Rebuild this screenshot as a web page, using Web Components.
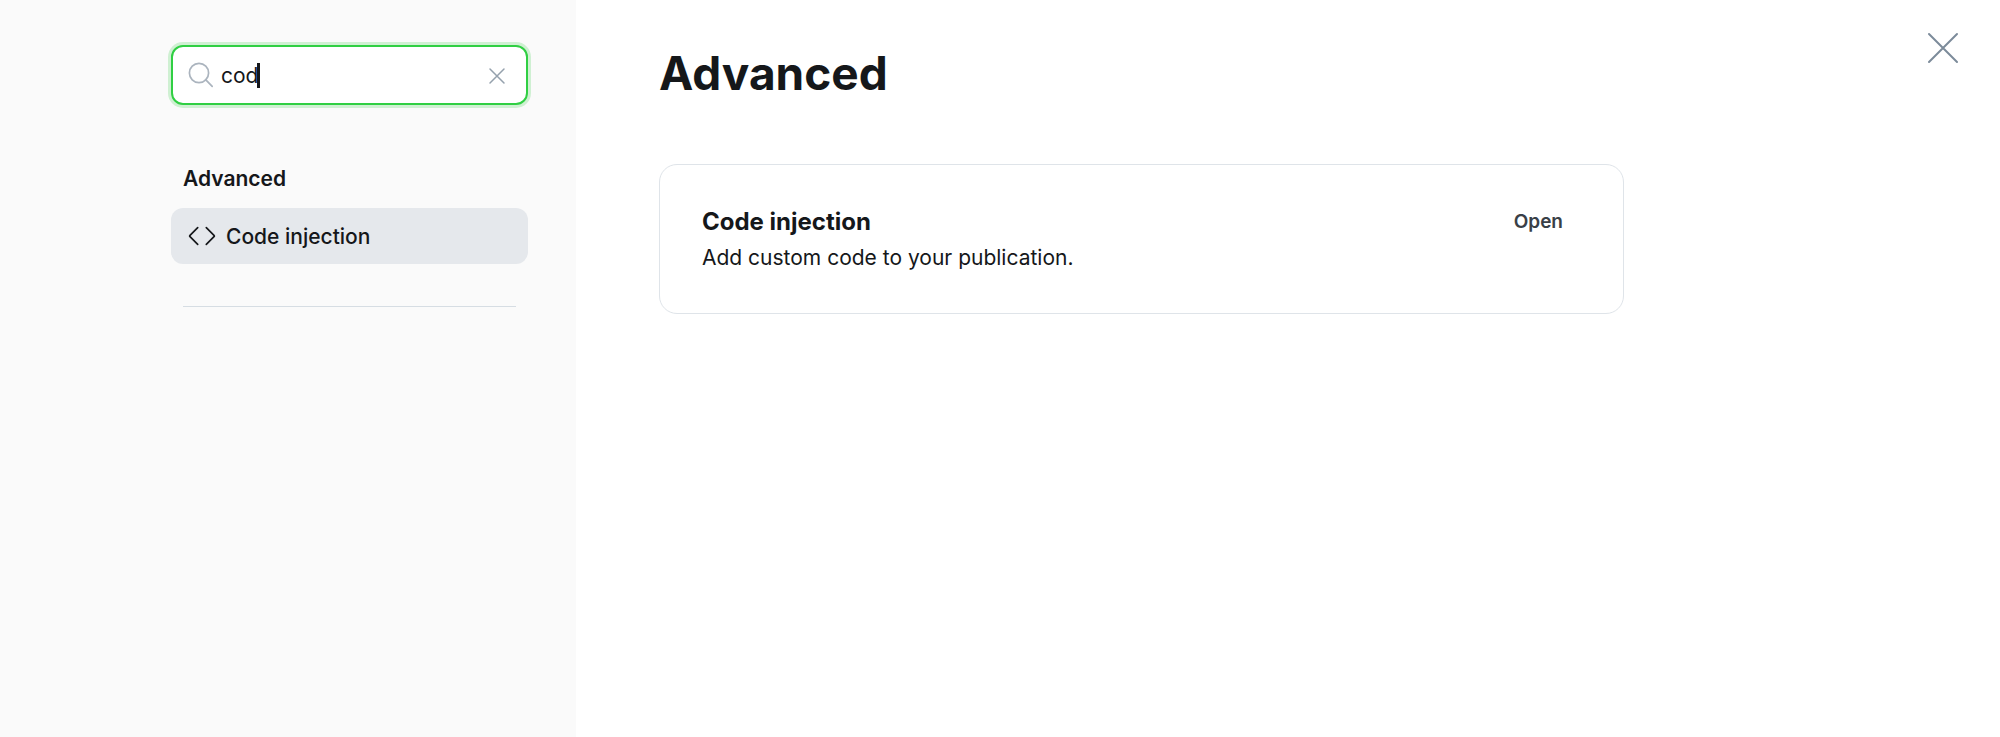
<!DOCTYPE html>
<html lang="en">
<head>
  <meta charset="utf-8">
  <meta name="viewport" content="width=device-width, initial-scale=1">
  <title>Settings</title>
  <style>
    body {
      color: #15171a;
      font-family: Inter, sans-serif;
      margin: 0;
    }
  </style>
</head>
<body>
  <settings-page>
    <settings-search slot="sidebar" value="cod"></settings-search>
    <nav-section slot="sidebar" heading="Advanced">
      <nav-item href="#code-injection">Code injection</nav-item>
    </nav-section>
    <setting-section heading="Advanced">
      <setting-card id="code-injection" action="Open">
        <span slot="title">Code injection</span>
        <span slot="description">Add custom code to your publication.</span>
      </setting-card>
    </setting-section>
  </settings-page>

  <script>
    // Attach an open shadow root filled from a markup string
    function render(el, html) {
      const template = document.createElement("template");
      template.innerHTML = html;
      el.attachShadow({mode: "open"}).appendChild(template.content.cloneNode(true));
    }

    class SettingsPage extends HTMLElement {
      constructor() {
        super();
        render(this, `
          <style>
            :host {
              background: #fff;
              display: flex;
              min-height: 100vh;
            }

            aside {
              background: #fafafa;
              box-sizing: border-box;
              display: flex;
              flex: none;
              flex-direction: column;
              gap: 58px;
              padding: 45px 48px 45px 171px;
              width: 576px;
            }

            main {
              flex: 1;
              max-width: 965px;
              padding: 45px 83px;
            }

            .exit {
              background: none;
              border: none;
              cursor: pointer;
              padding: 0;
              position: fixed;
              right: 41px;
              top: 32px;
            }

            .exit svg {
              display: block;
              height: 32px;
              width: 32px;
            }
          </style>
          <aside><slot name="sidebar"></slot></aside>
          <main><slot></slot></main>
          <button class="exit" type="button" aria-label="Close settings">
            <svg viewBox="0 0 32 32" fill="none" stroke="#7c8b9a" stroke-width="2" stroke-linecap="round">
              <path d="M2 2l28 28M30 2L2 30"/>
            </svg>
          </button>
        `);
      }
    }

    class SettingsSearch extends HTMLElement {
      constructor() {
        super();
        render(this, `
          <style>
            :host {
              display: block;
            }

            .box {
              align-items: center;
              background: #fff;
              border: 2px solid #30cf43;
              border-radius: 12px;
              box-shadow: 0 0 0 3px #cff0d2;
              box-sizing: border-box;
              display: flex;
              height: 60px;
              padding: 2px 20px 0 15px;
            }

            .lens {
              flex: none;
              height: 26px;
              margin: 0 7px 2px 0;
              width: 26px;
            }

            label {
              align-items: center;
              cursor: text;
              display: flex;
              flex: 1;
            }

            input {
              background: none;
              border: none;
              caret-color: transparent;
              color: inherit;
              field-sizing: content;
              font: 400 21px/28px Inter, sans-serif;
              outline: none;
              padding: 0;
            }

            .caret {
              background: #15171a;
              height: 25px;
              margin: 0 0 2px -1px;
              width: 3px;
            }

            button {
              background: none;
              border: none;
              cursor: pointer;
              padding: 0;
            }

            button svg {
              display: block;
              height: 18px;
              width: 18px;
            }
          </style>
          <div class="box">
            <label>
              <svg class="lens" viewBox="0 0 26 26" fill="none" stroke="#abb4be" stroke-width="1.7" stroke-linecap="round">
                <circle cx="11" cy="11" r="9.6"/>
                <path d="M17.6 17.6l6.6 6.8"/>
              </svg>
              <input type="text" aria-label="Search settings">
              <span class="caret"></span>
            </label>
            <button type="button" aria-label="Clear search">
              <svg viewBox="0 0 18 18" fill="none" stroke="#95a1ad" stroke-width="1.5" stroke-linecap="round">
                <path d="M2 2l14 14M16 2L2 16"/>
              </svg>
            </button>
          </div>
        `);
        const input = this.shadowRoot.querySelector("input");
        input.value = this.getAttribute("value") || "";
        this.shadowRoot.querySelector("button").onclick = function() {
          input.value = "";
          input.focus();
        };
      }
    }

    class NavSection extends HTMLElement {
      constructor() {
        super();
        render(this, `
          <style>
            :host {
              display: block;
            }

            h2 {
              font-size: 21px;
              font-weight: 600;
              line-height: 32px;
              margin: 0 12px 13px;
            }

            nav {
              display: flex;
              flex-direction: column;
            }

            hr {
              border: none;
              border-top: 1px solid #d6dde3;
              margin: 42px 12px 0;
            }
          </style>
          <h2></h2>
          <nav><slot></slot></nav>
          <hr>
        `);
        this.shadowRoot.querySelector("h2").textContent = this.getAttribute("heading");
      }
    }

    class NavItem extends HTMLElement {
      constructor() {
        super();
        render(this, `
          <style>
            :host {
              display: block;
            }

            a {
              align-items: center;
              background: #e5e8ec;
              border-radius: 12px;
              color: inherit;
              display: flex;
              font-size: 21px;
              font-weight: 500;
              gap: 10px;
              line-height: 28px;
              padding: 15px 17px 13px;
              text-decoration: none;
            }

            svg {
              flex: none;
              height: 28px;
              width: 28px;
            }
          </style>
          <a>
            <svg viewBox="0 0 28 28" fill="none" stroke="#15171a" stroke-width="1.7" stroke-linecap="round" stroke-linejoin="round">
              <path d="M9.7 4.7L2 12.3q-.7.7 0 1.4l7.7 7.6M18.3 4.7l7.7 7.6q.7.7 0 1.4l-7.7 7.6"/>
            </svg>
            <slot></slot>
          </a>
        `);
        this.shadowRoot.querySelector("a").href = this.getAttribute("href");
      }
    }

    class SettingSection extends HTMLElement {
      constructor() {
        super();
        render(this, `
          <style>
            :host {
              display: block;
            }

            h1 {
              font-size: 46px;
              font-weight: 700;
              line-height: 56px;
              margin: 0 0 63px;
            }
          </style>
          <h1></h1>
          <slot></slot>
        `);
        this.shadowRoot.querySelector("h1").textContent = this.getAttribute("heading");
      }
    }

    class SettingCard extends HTMLElement {
      constructor() {
        super();
        render(this, `
          <style>
            :host {
              border: 1px solid #dfe4e9;
              border-radius: 18px;
              box-sizing: border-box;
              display: flex;
              justify-content: space-between;
              padding: 41px 60px 41px 42px;
            }

            h3 {
              font-size: 24px;
              font-weight: 700;
              line-height: 32px;
              margin: 0;
            }

            p {
              font-size: 21px;
              line-height: 28px;
              margin: 6px 0 0;
            }

            button {
              align-self: flex-start;
              background: none;
              border: none;
              color: #394047;
              cursor: pointer;
              font: 600 19px/32px Inter, sans-serif;
              padding: 0;
            }
          </style>
          <div>
            <h3><slot name="title"></slot></h3>
            <p><slot name="description"></slot></p>
          </div>
          <button type="button"></button>
        `);
        this.shadowRoot.querySelector("button").textContent = this.getAttribute("action");
      }
    }

    customElements.define("settings-page", SettingsPage);
    customElements.define("settings-search", SettingsSearch);
    customElements.define("nav-section", NavSection);
    customElements.define("nav-item", NavItem);
    customElements.define("setting-section", SettingSection);
    customElements.define("setting-card", SettingCard);
  </script>
</body>
</html>
